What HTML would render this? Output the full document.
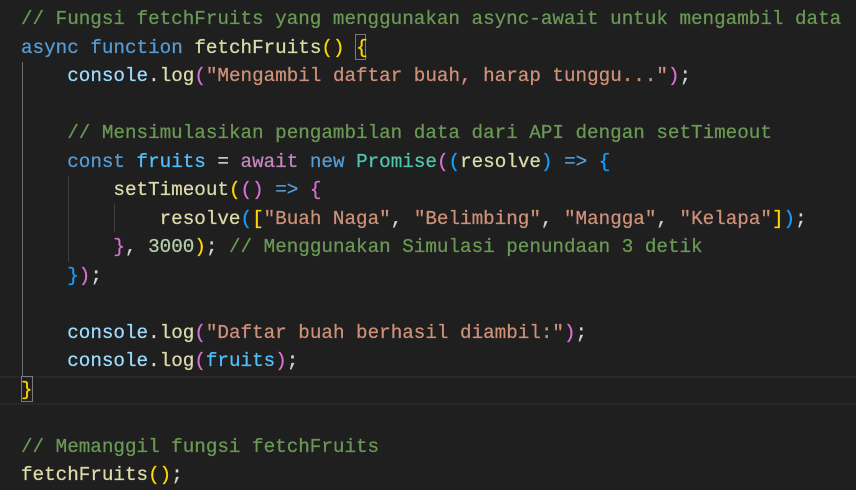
<!DOCTYPE html>
<html><head><meta charset="utf-8"><style>
html,body{margin:0;padding:0;background:#1f1f1f;width:856px;height:490px;overflow:hidden}
.c{position:absolute;left:21px;top:5px;font-family:"Liberation Mono",monospace;font-size:19.25px;line-height:28.5px;white-space:pre;color:#d4d4d4;-webkit-text-stroke:0.25px currentColor}
.cm{color:#6a9955}.k{color:#569cd6}.f{color:#dcdcaa}.v{color:#9cdcfe}.cn{color:#4fc1ff}.s{color:#ce9178}.n{color:#b5cea8}.ct{color:#c586c0}.t{color:#4ec9b0}
.b1{color:#ffd700}.b2{color:#da70d6}.b3{color:#179fff}
.g{position:absolute;width:1px;background:#404040}
</style></head><body>
<div style="position:absolute;left:0;top:376px;width:856px;height:25px;border-top:2px solid #282828;border-bottom:2px solid #282828"></div>
<div class="g" style="left:22px;top:62px;height:314px;background:#6e6e6e"></div>
<div class="g" style="left:68px;top:176px;height:86px"></div>
<div class="g" style="left:114px;top:204px;height:28px"></div>
<div style="position:absolute;left:355px;top:34px;width:11px;height:26px;border:1px solid #7a7a7a;box-sizing:border-box"></div>
<div style="position:absolute;left:21px;top:376px;width:12px;height:26px;border:1px solid #7a7a7a;box-sizing:border-box"></div>
<div class="c"><span class="cm">// Fungsi fetchFruits yang menggunakan async-await untuk mengambil data</span>
<span class="k">async</span> <span class="k">function</span> <span class="f">fetchFruits</span><span class="b1">()</span> <span class="b1">{</span>
    <span class="v">console</span>.<span class="f">log</span><span class="b2">(</span><span class="s">"Mengambil daftar buah, harap tunggu..."</span><span class="b2">)</span>;

    <span class="cm">// Mensimulasikan pengambilan data dari API dengan setTimeout</span>
    <span class="k">const</span> <span class="cn">fruits</span> = <span class="ct">await</span> <span class="k">new</span> <span class="t">Promise</span><span class="b2">(</span><span class="b3">(</span><span class="f">resolve</span><span class="b3">)</span> <span class="k">=&gt;</span> <span class="b3">{</span>
        <span class="f">setTimeout</span><span class="b1">(</span><span class="b2">()</span> <span class="k">=&gt;</span> <span class="b2">{</span>
            <span class="f">resolve</span><span class="b3">(</span><span class="b1">[</span><span class="s">"Buah Naga"</span>, <span class="s">"Belimbing"</span>, <span class="s">"Mangga"</span>, <span class="s">"Kelapa"</span><span class="b1">]</span><span class="b3">)</span>;
        <span class="b2">}</span>, <span class="n">3000</span><span class="b1">)</span>; <span class="cm">// Menggunakan Simulasi penundaan 3 detik</span>
    <span class="b3">}</span><span class="b2">)</span>;

    <span class="v">console</span>.<span class="f">log</span><span class="b2">(</span><span class="s">"Daftar buah berhasil diambil:"</span><span class="b2">)</span>;
    <span class="v">console</span>.<span class="f">log</span><span class="b2">(</span><span class="cn">fruits</span><span class="b2">)</span>;
<span class="b1">}</span>

<span class="cm">// Memanggil fungsi fetchFruits</span>
<span class="f">fetchFruits</span><span class="b1">()</span>;</div>
</body></html>
